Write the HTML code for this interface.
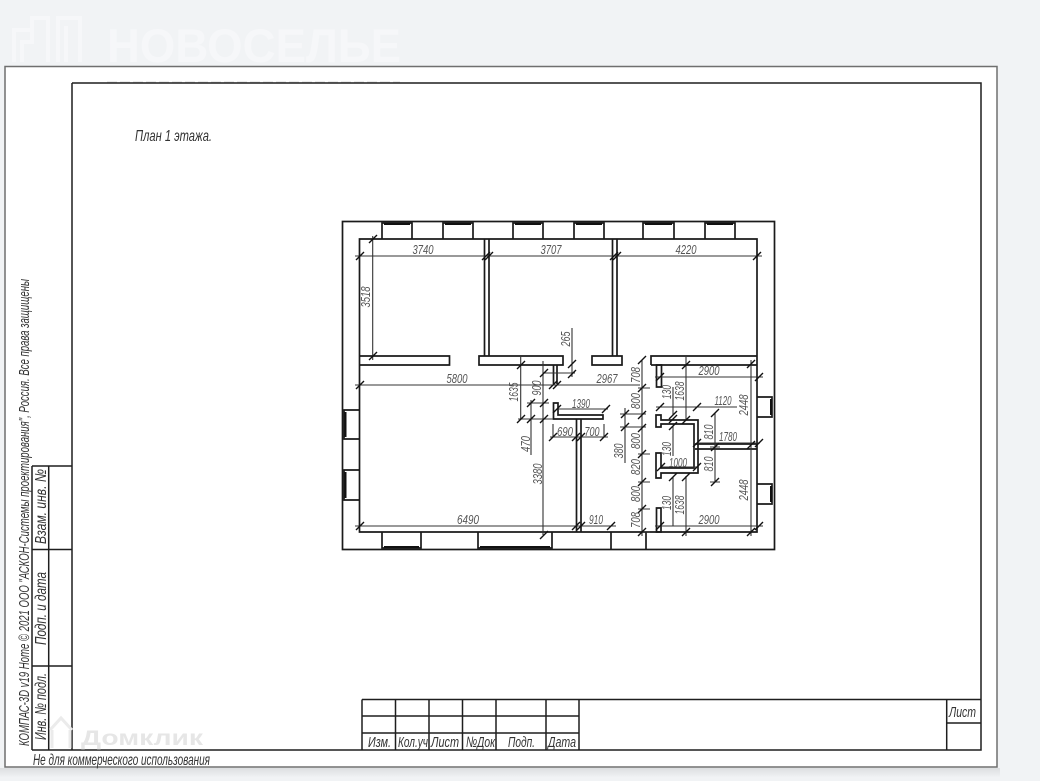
<!DOCTYPE html>
<html><head><meta charset="utf-8"><style>
html,body{margin:0;padding:0;background:#f1f3f5;width:1040px;height:781px;overflow:hidden}
svg{display:block;position:absolute;left:0;top:0;filter:blur(0.35px)}
text{font-family:"Liberation Sans","Noto Sans CJK SC",sans-serif;font-style:italic}
.d{font-size:13px;fill:#555;text-anchor:middle}
.t{font-size:15px;fill:#333}
.b{font-size:16px;fill:#333}
</style></head><body>
<svg width="1040" height="781" viewBox="0 0 1040 781">
<defs><linearGradient id="sh" x1="0" y1="0" x2="0" y2="1"><stop offset="0" stop-color="#dcdee0"/><stop offset="1" stop-color="#f0f2f4"/></linearGradient></defs>
<rect width="1040" height="781" fill="#f1f3f5"/>
<rect x="0" y="768" width="1000" height="9" fill="url(#sh)"/>
<!-- watermark top -->
<g fill="none" stroke="#f6f7f9" stroke-width="4"><path d="M14 62V30H32V18H48V62M32 30V42H22V62M58 62V18H80V62M66 62V26"/></g>
<text x="107" y="62" style="font-style:normal;font-weight:bold" font-size="47" fill="#f6f7f9" textLength="294" lengthAdjust="spacingAndGlyphs">НОВОСЕЛЬЕ</text>
<!-- sheet -->
<rect x="5" y="66.500" width="992" height="700.500" fill="#fff" stroke="#6f6f6f" stroke-width="1.500"/>
<path d="M107 82H400" stroke="#d8d8d8" stroke-width="1" stroke-dasharray="10 3"/>
<!-- frame -->
<g fill="none" stroke="#1e1e1e" stroke-width="1.500">
<path d="M72 83H981V750H32"/><path d="M72 83V750"/>
<path d="M32 466H72M32 549.500H72M32 666H72M32 466V750M48.700 466V750"/>
<path d="M362 699.500H981M362 716H579M362 733H579M362 699.500V750M395.500 699.500V750M429 699.500V750M462.500 699.500V750M496 699.500V750M546 699.500V750M579 699.500V750M946.700 699.500V750M947 723H981"/>
</g>
<!-- walls -->
<g fill="none" stroke="#1a1a1a" stroke-width="1.700">
<rect x="342.500" y="221.500" width="432" height="328"/>
<path d="M359.500 239H757V532H359.500Z"/>
<path d="M382 239V223H412V239M443 239V223H473V239M513 239V223H543V239M574 239V223H604V239M643 239V223H674V239M705 239V223H735V239"/>
<path d="M359 410H344V439H359M359 470H344V500H359M757 397H772V417H757M757 484H772V504H757"/>
<path d="M382 532V548H421V532M478 532V548H552V532M611 532V550M646 532V550"/>
<path d="M484.500 239V356M489 239V356M612.500 239V356M617 239V356"/>
<path d="M359.500 356H449.500V365H359.500M479 356H563V365H479ZM592 356H622V365H592ZM651 365V356H757M651 365H757"/>
<path d="M553.500 365V384M557 365V384"/>
<path d="M576.500 419V532M581 419V532"/>
<path d="M695 444H757M695 449H757"/>
<path d="M656 415H661V420H698V473H661V478H656V453H661V468H694V424H661V427H656Z"/>
<path d="M553.500 403H558V415H603V419H553.500Z"/>
<path d="M656.500 508H661V532H656.500Z"/>
<path d="M656.500 365H661.500V387H656.500Z"/>
</g>
<g fill="none" stroke="#111" stroke-width="2">
<path d="M384 224H410M445 224H471M515 224H541M576 224H602M645 224H672M707 224H733M384 547H419M480 547H550"/>
<path d="M345.500 412V437M345.500 472V498M771 399V415M771 486V502"/>
</g>
<!-- dimension lines -->
<g fill="none" stroke="#333" stroke-width="1.100">
<path d="M355 256H762M372.700 236V360M355 385H640M520.700 356V420M543 361V535M531 400V455M527 403H549M518 419H553M544 373H575M572 328V377M557 409H608M550 437H608M553 424V437M604 424V437M355 526H616"/>
<path d="M642 360V536M686 357V420M686 476V536M751 360V536M655 377H763M655 526H763M656 407H737M715 413V482M697 443H760M662 467H697M625 408V463M620 414H646M620 427H646M673 387V415M673 426V456M673 477V526M638 388H650M638 454H650M638 482H650M638 509H650M642 532H650M710 447H720M710 482H720"/>
</g>
<path fill="none" stroke="#111" stroke-width="1.400" d="M356 260l8-8M482 260l8-8M485 260l8-8M610 260l8-8M613 260l8-8M753 260l8-8M369 243l8-8M369 360l8-8M356 389l8-8M549 389l8-8M553 389l8-8M517 369l8-8M517 423l8-8M540 377l8-8M527 407l8-8M540 407l8-8M527 423l8-8M540 423l8-8M568 368l8-8M568 378l8-8M602 413l8-8M553 413l8-8M549 441l8-8M572 441l8-8M577 441l8-8M600 441l8-8M356 530l8-8M572 530l8-8M577 530l8-8M607 530l8-8M540 539l8-8M638 364l8-8M638 392l8-8M638 419l8-8M638 432l8-8M638 458l8-8M638 486l8-8M638 513l8-8M638 536l8-8M682 369l8-8M747 368l8-8M656 381l8-8M755 381l8-8M656 411l8-8M693 411l8-8M669 419l8-8M669 430l8-8M669 423l8-8M682 424l8-8M669 481l8-8M682 481l8-8M711 417l8-8M711 451l8-8M711 486l8-8M693 447l8-8M747 449l8-8M755 447l8-8M657 471l8-8M693 471l8-8M621 418l8-8M621 431l8-8M682 536l8-8M747 536l8-8M656 530l8-8M755 530l8-8"/>
<!-- dimension text -->
<text class="d" x="423" y="254" textLength="21" lengthAdjust="spacingAndGlyphs">3740</text>
<text class="d" x="551" y="254" textLength="21" lengthAdjust="spacingAndGlyphs">3707</text>
<text class="d" x="686" y="254" textLength="21" lengthAdjust="spacingAndGlyphs">4220</text>
<text class="d" x="457" y="383" textLength="21" lengthAdjust="spacingAndGlyphs">5800</text>
<text class="d" x="607" y="383" textLength="21" lengthAdjust="spacingAndGlyphs">2967</text>
<text class="d" x="709" y="375" textLength="21" lengthAdjust="spacingAndGlyphs">2900</text>
<text class="d" x="709" y="524" textLength="21" lengthAdjust="spacingAndGlyphs">2900</text>
<text class="d" x="723" y="405" textLength="17" lengthAdjust="spacingAndGlyphs">1120</text>
<text class="d" x="728" y="441" textLength="18" lengthAdjust="spacingAndGlyphs">1780</text>
<text class="d" x="678" y="467" textLength="18" lengthAdjust="spacingAndGlyphs">1000</text>
<text class="d" x="581" y="408" textLength="18" lengthAdjust="spacingAndGlyphs">1390</text>
<text class="d" x="565" y="436" textLength="16" lengthAdjust="spacingAndGlyphs">690</text>
<text class="d" x="592" y="436" textLength="15" lengthAdjust="spacingAndGlyphs">700</text>
<text class="d" x="468" y="524" textLength="22" lengthAdjust="spacingAndGlyphs">6490</text>
<text class="d" x="596" y="524" textLength="14" lengthAdjust="spacingAndGlyphs">910</text>
<text class="d" transform="translate(370 297) rotate(-90)" textLength="21" lengthAdjust="spacingAndGlyphs">3518</text>
<text class="d" transform="translate(518 392) rotate(-90)" textLength="19" lengthAdjust="spacingAndGlyphs">1635</text>
<text class="d" transform="translate(541 388) rotate(-90)" textLength="15" lengthAdjust="spacingAndGlyphs">900</text>
<text class="d" transform="translate(570 339) rotate(-90)" textLength="15" lengthAdjust="spacingAndGlyphs">265</text>
<text class="d" transform="translate(640 375) rotate(-90)" textLength="16" lengthAdjust="spacingAndGlyphs">708</text>
<text class="d" transform="translate(640 401) rotate(-90)" textLength="16" lengthAdjust="spacingAndGlyphs">800</text>
<text class="d" transform="translate(640 441) rotate(-90)" textLength="16" lengthAdjust="spacingAndGlyphs">800</text>
<text class="d" transform="translate(640 467) rotate(-90)" textLength="16" lengthAdjust="spacingAndGlyphs">820</text>
<text class="d" transform="translate(640 494) rotate(-90)" textLength="16" lengthAdjust="spacingAndGlyphs">800</text>
<text class="d" transform="translate(640 520) rotate(-90)" textLength="16" lengthAdjust="spacingAndGlyphs">708</text>
<text class="d" transform="translate(623 451) rotate(-90)" textLength="15" lengthAdjust="spacingAndGlyphs">380</text>
<text class="d" transform="translate(671 392) rotate(-90)" textLength="14" lengthAdjust="spacingAndGlyphs">130</text>
<text class="d" transform="translate(671 449) rotate(-90)" textLength="14" lengthAdjust="spacingAndGlyphs">130</text>
<text class="d" transform="translate(671 503) rotate(-90)" textLength="14" lengthAdjust="spacingAndGlyphs">130</text>
<text class="d" transform="translate(684 391) rotate(-90)" textLength="19" lengthAdjust="spacingAndGlyphs">1638</text>
<text class="d" transform="translate(684 505) rotate(-90)" textLength="19" lengthAdjust="spacingAndGlyphs">1638</text>
<text class="d" transform="translate(748 405) rotate(-90)" textLength="21" lengthAdjust="spacingAndGlyphs">2448</text>
<text class="d" transform="translate(748 490) rotate(-90)" textLength="21" lengthAdjust="spacingAndGlyphs">2448</text>
<text class="d" transform="translate(713 432) rotate(-90)" textLength="15" lengthAdjust="spacingAndGlyphs">810</text>
<text class="d" transform="translate(713 464) rotate(-90)" textLength="15" lengthAdjust="spacingAndGlyphs">810</text>
<text class="d" transform="translate(530 444) rotate(-90)" textLength="16" lengthAdjust="spacingAndGlyphs">470</text>
<text class="d" transform="translate(542 474) rotate(-90)" textLength="21" lengthAdjust="spacingAndGlyphs">3380</text>
<!-- labels -->
<text class="b" x="135" y="141" textLength="77" lengthAdjust="spacingAndGlyphs">План 1 этажа.</text>
<text class="t" transform="translate(29 746) rotate(-90)" textLength="467" lengthAdjust="spacingAndGlyphs">КОМПАС-3D v19 Home © 2021 ООО "АСКОН-Системы проектирования", Россия. Все права защищены</text>
<text class="b" x="33" y="765" textLength="177" lengthAdjust="spacingAndGlyphs">Не для коммерческого использования</text>
<text class="b" transform="translate(46 544) rotate(-90)" textLength="75" lengthAdjust="spacingAndGlyphs">Взам. инв. №</text>
<text class="b" transform="translate(46 645) rotate(-90)" textLength="73" lengthAdjust="spacingAndGlyphs">Подп. и дата</text>
<text class="b" transform="translate(46 740) rotate(-90)" textLength="67" lengthAdjust="spacingAndGlyphs">Инв. № подл.</text>
<text class="t" x="368" y="747" textLength="23" lengthAdjust="spacingAndGlyphs">Изм.</text>
<text class="t" x="398" y="747" textLength="30" lengthAdjust="spacingAndGlyphs">Кол.уч</text>
<text class="t" x="431" y="747" textLength="28" lengthAdjust="spacingAndGlyphs">Лист</text>
<text class="t" x="466" y="747" textLength="29" lengthAdjust="spacingAndGlyphs">№Док</text>
<text class="t" x="508" y="747" textLength="27" lengthAdjust="spacingAndGlyphs">Подп.</text>
<text class="t" x="548" y="747" textLength="28" lengthAdjust="spacingAndGlyphs">Дата</text>
<text class="t" x="949" y="717" textLength="27" lengthAdjust="spacingAndGlyphs">Лист</text>
<!-- domclick watermark -->
<path d="M50 730L61 718L72 730M52 730V748M70 730V748" fill="none" stroke="#ebebeb" stroke-width="3"/>
<text x="81" y="745" style="font-style:normal;font-weight:bold" font-size="21" fill="#e6e6e6" textLength="122" lengthAdjust="spacingAndGlyphs">Домклик</text>
</svg>
</body></html>
